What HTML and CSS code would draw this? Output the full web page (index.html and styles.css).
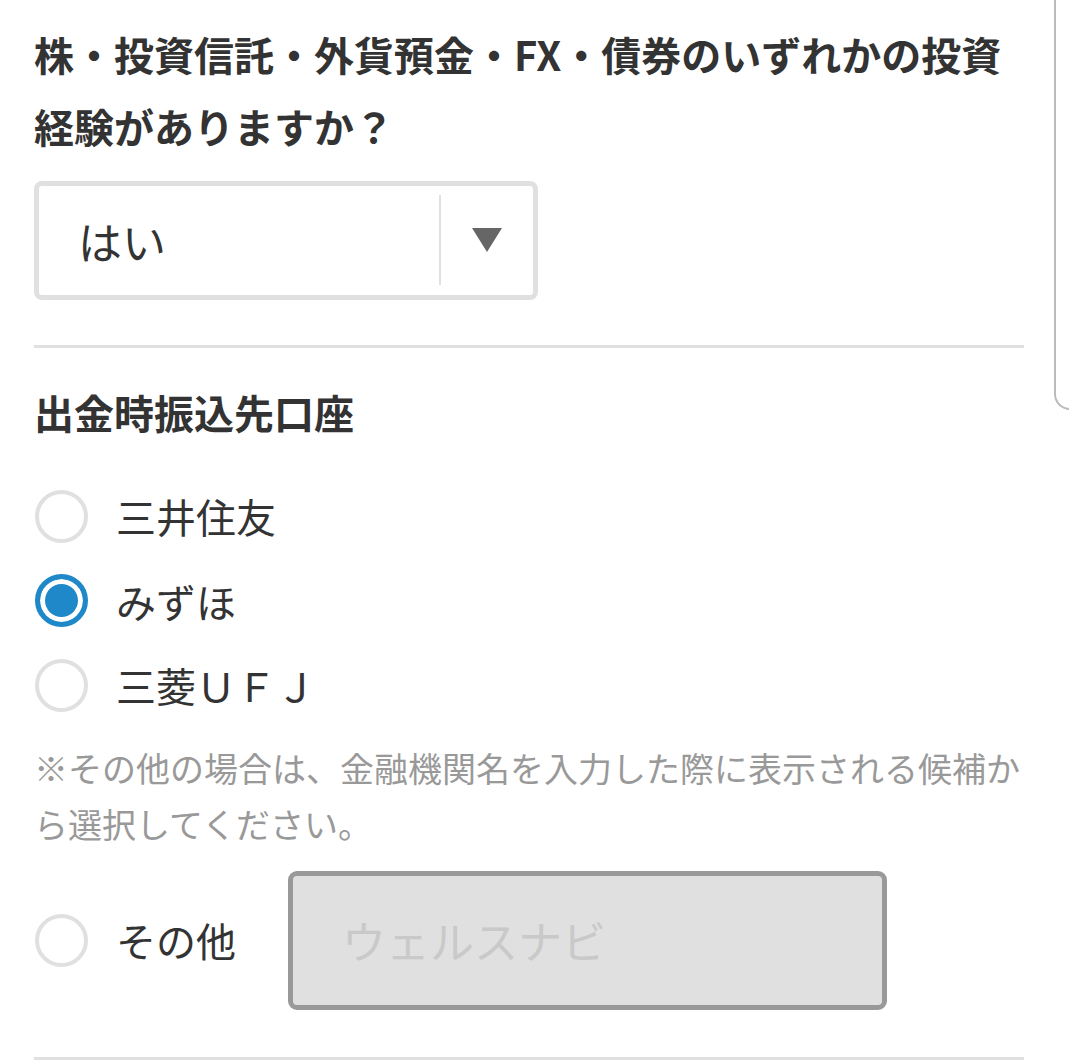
FILE: index.html
```html
<!DOCTYPE html>
<html lang="ja">
<head>
    <meta charset="UTF-8">
    <meta name="viewport" content="width=device-width, initial-scale=1.0">
    <title>口座開設</title>
    <link rel="stylesheet" href="styles.css">
</head>
<body>
    <!-- Side panel edge -->
    <div class="side-edge"></div>

    <form class="form">
        <!-- Investment experience -->
        <section class="field">
            <h2 class="field-title">株・投資信託・外貨預金・FX・債券のいずれかの投資経験がありますか？</h2>
            <div class="select-box">
                <span class="select-value">はい</span>
                <span class="select-arrow"><span class="triangle"></span></span>
            </div>
        </section>

        <!-- Bank account -->
        <section class="field field-bank">
            <h2 class="field-title">出金時振込先口座</h2>
            <ul class="radio-list">
                <li><label class="radio"><input type="radio" name="bank"> 三井住友</label></li>
                <li><label class="radio"><input type="radio" name="bank" checked> みずほ</label></li>
                <li><label class="radio"><input type="radio" name="bank"> 三菱ＵＦＪ</label></li>
            </ul>
            <p class="note">※その他の場合は、金融機関名を入力した際に表示される候補から選択してください。</p>
            <div class="other-row">
                <label class="radio"><input type="radio" name="bank"> その他</label>
                <input type="text" class="bank-input" placeholder="ウェルスナビ" disabled>
            </div>
        </section>
    </form>
</body>
</html>
```
FILE: styles.css
```css
/* General Styles */
body {
    font-family: "Noto Sans CJK JP", "Noto Sans", sans-serif;
    background: #fff;
    margin: 0;
    padding: 0;
    color: #333;
    overflow: hidden;
}

.form {
    width: 990px;
    padding: 18px 0 0 34px;
}

/* Field sections */
.field {
    border-bottom: 3px solid #e0e0e0;
    padding-bottom: 45px;
}

.field-bank {
    padding-top: 28px;
    padding-bottom: 47px;
}

.field-title {
    font-size: 40px;
    line-height: 72px;
    font-weight: bold;
    margin: 0;
    color: #333;
}

/* Select box */
.select-box {
    display: flex;
    align-items: center;
    width: 494px;
    height: 109px;
    margin-top: 19px;
    border: 5px solid #e0e0e0;
    border-radius: 8px;
}

.select-value {
    flex: 1;
    font-size: 44px;
    padding-left: 39px;
}

.select-arrow {
    display: flex;
    align-items: center;
    justify-content: center;
    width: 92px;
    align-self: stretch;
    margin: 9px 0 10px;
    border-left: 2px solid #e0e0e0;
}

.triangle {
    width: 0;
    height: 0;
    border-left: 15px solid transparent;
    border-right: 15px solid transparent;
    border-top: 24px solid #666;
}

/* Radio buttons */
.radio-list {
    list-style: none;
    margin: 26px 0 0;
    padding: 0;
}

.radio-list li {
    height: 84.5px;
    display: flex;
    align-items: center;
}

.radio {
    display: flex;
    align-items: center;
    gap: 28px;
    font-size: 40px;
    color: #333;
}

.radio input {
    appearance: none;
    width: 53px;
    height: 53px;
    margin: 0 0 0 1px;
    border: 4px solid #e0e0e0;
    border-radius: 50%;
    background: #fff;
}

.radio input:checked {
    border: 5px solid #1e88c8;
    background: #1e88c8;
    box-shadow: inset 0 0 0 5px #fff;
}

/* Note */
.note {
    margin: 12px 0 0;
    font-size: 34px;
    line-height: 56px;
    color: #999;
}

/* Other bank row */
.other-row {
    display: flex;
    align-items: center;
    gap: 52px;
    margin-top: 19px;
}

.bank-input {
    width: 599px;
    height: 139px;
    box-sizing: border-box;
    padding: 0 0 0 49px;
    border: 5px solid #999;
    border-radius: 9px;
    background: #e0e0e0;
    font-family: inherit;
    font-size: 44px;
}

.bank-input::placeholder {
    color: #c9c9c9;
}

/* Right panel edge */
.side-edge {
    position: absolute;
    top: -20px;
    left: 1054px;
    width: 15px;
    height: 428px;
    border-left: 2px solid #bbb;
    border-bottom: 2px solid #bbb;
    border-bottom-left-radius: 16px;
}
```
